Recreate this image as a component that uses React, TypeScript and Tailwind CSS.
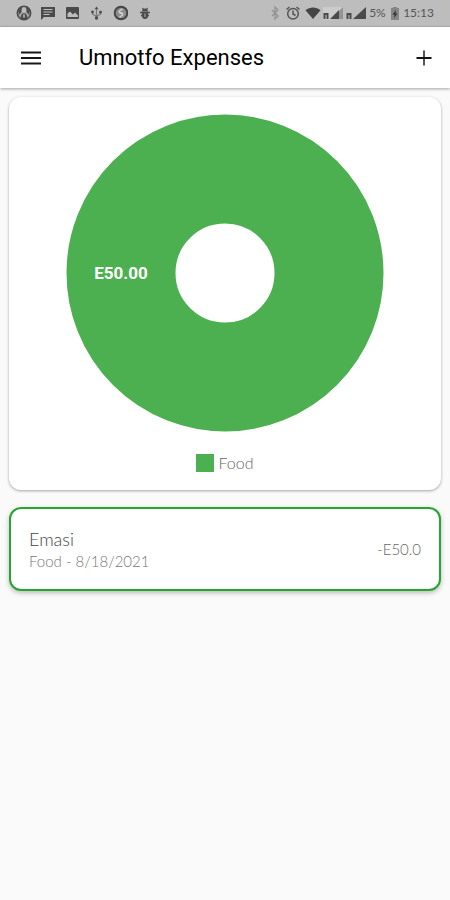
import type { ReactNode } from "react";

function Glyph({ children, className = "w-4", viewBox = "0 0 16 16" }: { children: ReactNode; className?: string; viewBox?: string }) {
  return (
    <svg viewBox={viewBox} className={`h-4 shrink-0 ${className}`} fill="none" aria-hidden="true">
      {children}
    </svg>
  );
}

function Signal({ boxed }: { boxed?: boolean }) {
  return (
    <svg viewBox="0 0 21 16" className="h-4 w-[21px] shrink-0" aria-hidden="true">
      {boxed && <path d="M0 2h21L8 15H0z" fill="#cbcbcb" />}
      {boxed && <path d="M20 2v12h-4V6z" fill="#939393" />}
      <path d={boxed ? "M16 5v9H7z" : "M20 2v12H7z"} fill="#4a4a4a" />
      <path d="M1.500 14V9h3v5" fill="none" stroke="#4a4a4a" strokeWidth="2" />
    </svg>
  );
}

function StatusBar() {
  return (
    <div className="flex h-[27px] items-center justify-between border-b border-[#b0b0b0] bg-[#bdbdbd] px-4 text-[#555]">
      <div className="flex items-center gap-2">
        <Glyph>
          <circle cx="8" cy="8" r="6.700" fill="#a8a8a8" stroke="#4c4c4c" strokeWidth="1.600" />
          <path d="M2 5c1-3 3-3.500 4-3.500L5.500 7 3 10zM14 5c-1-3-3-3.500-4-3.500L10.500 7 13 10zM4.500 13.500c0-7 7-7 7 0L8 15z" fill="#4c4c4c" />
          <circle cx="8" cy="5.200" r="2.200" fill="#bdbdbd" />
          <path d="M8 9.500v3" stroke="#bdbdbd" strokeWidth="1.600" />
        </Glyph>
        <Glyph>
          <path d="M1 2h14v10H4l-3 3z" fill="#4a4a4a" />
          <path d="M3.500 4.500h9M3.500 7h9M3.500 9.500h6" stroke="#bdbdbd" strokeWidth="1.200" />
        </Glyph>
        <Glyph>
          <rect x="2" y="2" width="13" height="12" rx="1" fill="#4a4a4a" />
          <path d="M3.500 12V8.500l2.500-2 3 3 2-2 3 3V12z" fill="#bdbdbd" />
        </Glyph>
        <Glyph>
          <path d="M8.500 3v10M4.500 7v2l4 2.500 4-2.500V7" stroke="#777" strokeWidth="1.200" />
          <path d="M8.500 1.500l2 2.800h-4z" fill="#4c4c4c" />
          <circle cx="8.500" cy="13" r="1.700" fill="#4c4c4c" />
          <circle cx="4.500" cy="7" r="1.400" fill="#4c4c4c" />
          <path d="M11.200 5.800h2.600v2.600h-2.600z" fill="#4c4c4c" />
        </Glyph>
        <Glyph>
          <circle cx="9" cy="8" r="6.300" fill="#8c8c8c" stroke="#444" strokeWidth="1.900" />
          <path d="M10.500 3.800L8 5.500c-2 1.800.5 3.200 2 2.500M7.500 12.200l2.500-1.700c2-1.800-.5-3.200-2-2.500" stroke="#d2d2d2" strokeWidth="1.500" />
        </Glyph>
        <Glyph>
          <path d="M6 6.500a3 3 0 0 1 6 0zM6 7.500h6V11a3 3 0 0 1-6 0z" fill="#4c4c4c" />
          <path d="M6.500 3l1 1.500M11.500 3l-1 1.500M4 7.500h10M5 10.500h8" stroke="#4c4c4c" strokeWidth="1.300" />
          <path d="M9 8.500v3.500" stroke="#a0a0a0" strokeWidth="1.200" />
        </Glyph>
      </div>
      <div className="flex items-center">
        <Glyph className="mr-1 w-3" viewBox="2 0 12 16">
          <path d="M5 5l6 6-3 3V2l3 3-6 6" stroke="#929292" strokeWidth="1.300" />
        </Glyph>
        <Glyph className="mr-1 w-4">
          <circle cx="8" cy="8.800" r="5.300" stroke="#555" strokeWidth="1.500" />
          <path d="M8 5.500V9l2.500 1.500M1.500 4.500l3-2.500M14.500 4.500l-3-2.500" stroke="#555" strokeWidth="1.500" />
        </Glyph>
        <Glyph className="mr-0.5 w-4">
          <path d="M.5 5.200C5 1.500 11 1.500 15.500 5.200L8 14z" fill="#454545" />
        </Glyph>
        <span className="mr-0.5 flex gap-0.5">
          <Signal boxed />
          <Signal />
        </span>
        <span className="w-[22px] font-['Lato','Noto_Sans',sans-serif] text-xs">5%</span>
        <Glyph className="mr-1 w-2" viewBox="4 0 8 16">
          <path d="M6 2h4v1h2v12H4V3h2z" fill="#858585" />
          <path d="M9 5L5.500 9.500h2L7 13l3.500-4.500h-2z" fill="#333" />
        </Glyph>
        <time className="font-['Lato','Noto_Sans',sans-serif] text-xs">15:13</time>
      </div>
    </div>
  );
}

function AppBar() {
  return (
    <header className="relative flex h-[61px] items-center justify-between bg-white pr-3 pl-[19px] shadow-[0_1px_3px_rgba(0,0,0,0.35)]">
      <div className="flex items-center">
        <button type="button" aria-label="Open menu" className="mr-9 flex size-6 items-center justify-center">
          <svg viewBox="0 0 24 24" className="size-6" aria-hidden="true">
            <path d="M2 6.500h20M2 12h20M2 17.500h20" stroke="#181818" strokeWidth="2" />
          </svg>
        </button>
        <h1 className="font-['Roboto',sans-serif] text-[22px] leading-7 text-black">Umnotfo Expenses</h1>
      </div>
      <button type="button" aria-label="Add expense" className="flex size-7 items-center justify-center">
        <svg viewBox="0 0 28 28" className="size-7" aria-hidden="true">
          <path d="M14 6.500v15" stroke="#555" strokeWidth="2" />
          <path d="M6.500 14h15" stroke="#111" strokeWidth="2" />
        </svg>
      </button>
    </header>
  );
}

function ExpenseChart() {
  return (
    <section aria-label="Expenses by category" className="flex flex-col items-center rounded-xl bg-white px-4 pt-[17px] pb-4 shadow-[0_1px_3px_rgba(0,0,0,0.35)]">
      <svg viewBox="0 0 318 318" className="w-full max-w-[318px]" role="img" aria-label="Food: E50.00">
        <circle cx="159" cy="159" r="104" fill="none" stroke="#4caf50" strokeWidth="109" />
        <text x="55" y="165" textAnchor="middle" fill="#fff" className="font-['Roboto',sans-serif] text-[17px] font-bold">E50.00</text>
      </svg>
      <div className="mt-5 flex items-center gap-1">
        <span className="size-[18px] bg-[#4caf50]" />
        <span className="font-['Lato','Noto_Sans',sans-serif] text-base leading-[22px] font-light text-[#666]">Food</span>
      </div>
    </section>
  );
}

function ExpenseItem({ name, detail, amount }: { name: string; detail: string; amount: string }) {
  return (
    <li className="flex items-center justify-between rounded-xl border-2 border-[#26a532] bg-white p-[18px] font-['Lato','Noto_Sans',sans-serif] font-light shadow-[0_2px_5px_rgba(0,0,0,0.25)]">
      <div>
        <p className="text-lg leading-6 text-[#444]">{name}</p>
        <p className="text-[15px] leading-5 text-[#777]">{detail}</p>
      </div>
      <p className="text-[15px] leading-5 text-[#666]">{amount}</p>
    </li>
  );
}

export default function App() {
  return (
    <div className="min-h-screen bg-[#fafafa]">
      <StatusBar />
      <AppBar />
      <main className="flex flex-col gap-[17px] px-[9px] pt-[9px]">
        <ExpenseChart />
        <ul>
          <ExpenseItem name="Emasi" detail="Food - 8/18/2021" amount="-E50.0" />
        </ul>
      </main>
    </div>
  );
}
